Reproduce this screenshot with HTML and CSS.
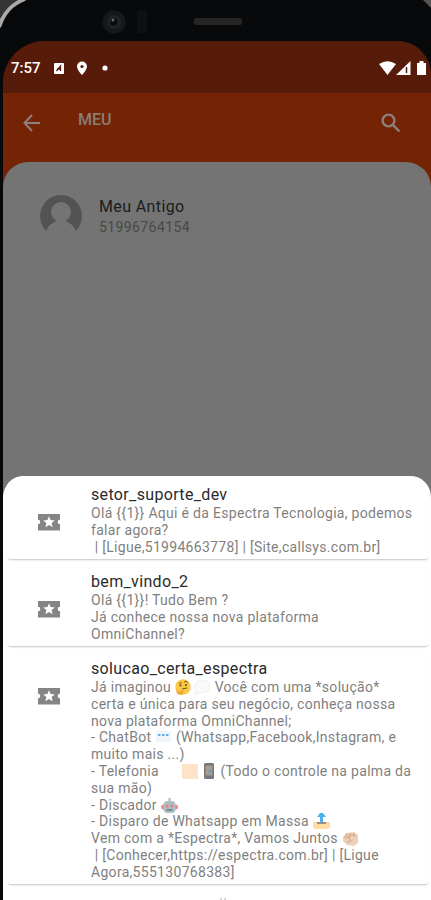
FILE: index.html
```html
<!DOCTYPE html>
<html lang="pt-BR">
<head>
<meta charset="utf-8">
<title>MEU</title>
<link rel="stylesheet" href="styles.css">
</head>
<body>
<svg class="defs" width="0" height="0"><defs>
<symbol id="ticket" viewBox="0 0 22 18"><path fill="#858585" d="M0 1h22v5.700a2.300 2.300 0 0 0 0 4.600V17.500H0v-6.200a2.300 2.300 0 0 0 0-4.600z"/><path fill="#fff" d="m11 3.200 1.600 3.900 4.200.3-3.200 2.700 1 4.100-3.600-2.300-3.600 2.300 1-4.100-3.200-2.700 4.200-.3z"/></symbol>
</defs></svg>
<div class="phone">
  <header class="bezel">
    <svg width="431" height="41" viewBox="0 0 431 41">
      <path d="M0 0h22C10 6 4 15 0 27z" fill="#333537"/>
      <path d="M25-1C12 4 4 12-1 27" fill="none" stroke="#aaa" stroke-width="4"/>
      <path d="M423 0h8v8z" fill="#555"/>
      <circle cx="114" cy="22" r="11.500" fill="#17181a"/><circle cx="114" cy="22" r="7" fill="#202124"/><circle cx="114" cy="22" r="3.500" fill="#08090b"/><circle cx="113" cy="20" r="1.500" fill="#666970"/>
      <rect x="137" y="10" width="10" height="23" rx="2" fill="#0f1011"/>
      <rect x="194" y="18" width="48" height="7" rx="2" fill="#252526"/>
    </svg>
  </header>
  <main class="screen">
    <div class="status">
      <span class="clock">7:57</span>
      <svg class="notes" width="58" height="18" viewBox="0 0 58 18">
        <rect x="2" y="4" width="10" height="11" rx="1" fill="#fff"/><path d="m4.500 12 4-5v5M5 10h4" stroke="#571b09" stroke-width="1.300" fill="none"/>
        <path d="M30 2.500a5 5 0 0 0-5 5c0 3.500 5 8.500 5 8.500s5-5 5-8.500a5 5 0 0 0-5-5" fill="#fff"/><circle cx="30" cy="7.500" r="1.600" fill="#571b09"/>
        <circle cx="53" cy="9" r="2.600" fill="#fff"/>
      </svg>
      <svg class="signals" width="50" height="18" viewBox="0 0 50 18">
        <path d="M1 5Q9.500-.5 18 5L9.500 16z" fill="#fff"/><path d="M18 16 32.500 2v14z" fill="#fff"/><path d="M28.500 8v6" stroke="#571b09" stroke-width="1.500"/>
        <path d="M39 4h2.500V2h4v2H48v12h-9z" fill="#fff"/>
      </svg>
    </div>
    <div class="appbar">
      <svg width="20" height="20" viewBox="0 0 20 20" fill="none" stroke="#8c807c" stroke-width="2"><path d="M18 10H3M10 2 2.500 10l7.500 8"/></svg>
      <h1>MEU</h1>
      <svg class="search" width="22" height="22" viewBox="0 0 22 22" fill="none" stroke="#8c807c" stroke-width="2.400"><circle cx="8.500" cy="8.500" r="5.900"/><path d="m12.800 12.800 6.700 6.700"/></svg>
    </div>
    <section class="contacts">
      <svg width="44" height="44" viewBox="0 0 44 44"><circle cx="22" cy="22" r="21" fill="#535353"/><path d="M7 37c3-7 6-7 10-10h10c4 3 7 3 10 10-5 9-25 9-30 0z" fill="#747474"/><circle cx="22" cy="18" r="10" fill="#747474"/></svg>
      <div class="contact"><div class="name">Meu Antigo</div><div class="number">51996764154</div></div>
    </section>
    <section class="sheet">
      <article class="card">
        <svg class="ticket"><use href="#ticket"/></svg>
        <div class="copy"><h2>setor_suporte_dev</h2>
          <p>Olá {{1}} Aqui é da Espectra Tecnologia, podemos</p><p>falar agora?</p><p> | [Ligue,51994663778] | [Site,callsys.com.br]</p></div>
      </article>
      <article class="card">
        <svg class="ticket"><use href="#ticket"/></svg>
        <div class="copy"><h2>bem_vindo_2</h2><p>Olá {{1}}! Tudo Bem ?</p><p>Já conhece nossa nova plataforma</p><p>OmniChannel?</p></div>
      </article>
      <article class="card">
        <svg class="ticket"><use href="#ticket"/></svg>
        <div class="copy"><h2>solucao_certa_espectra</h2>
          <p>Já imaginou <svg class="emoji wide" viewBox="0 0 36 17"><circle cx="8" cy="8" r="7.700" fill="#fac943"/><path d="M4 5q2-2 3-1M9 3q3-2 4 1M7 10l5-1" fill="none" stroke="#75511c"/><circle cx="5.500" cy="6.500" r="1" fill="#65451b"/><circle cx="11" cy="6" r="1" fill="#65451b"/><path d="m1 10 2 3 6-2-2 5-5-1z" fill="#eda936"/><path d="M21 5q1-4 6-3 6-2 7 4 2 5-4 7l-6 1-4 2 1-4q-4-3 0-7" fill="#fafafa" stroke="#f0f0f0"/></svg> Você com uma *solução*</p>
          <p>certa e única para seu negócio, conheça nossa</p><p>nova plataforma OmniChannel;</p>
          <p>- ChatBot <svg class="emoji" viewBox="0 0 17 17"><path d="M1 2h15v11H5l-3 2v-2H1z" fill="#f1f6f9"/><path d="M3 6h11" stroke="#62b0e5" stroke-width="2" stroke-dasharray="2.500 1.500"/></svg> (Whatsapp,Facebook,Instagram, e</p><p>muito mais ...)</p>
          <p>- Telefonia <svg class="emoji phones" viewBox="0 0 54 17"><rect x="19" y="1" width="16" height="15" fill="#ffe3c9"/><rect x="41" y="0" width="10" height="16" rx="1.500" fill="#777"/><rect x="42.500" y="2.500" width="7" height="10" fill="#9a9d9e"/><path d="M43 5h2m1 0h3M43 9h2" stroke="#c99875" stroke-width="2"/><path d="M46 8h3" stroke="#6c9fa3" stroke-width="2"/></svg> (Todo o controle na palma da</p><p>sua mão)</p>
          <p>- Discador <svg class="emoji" viewBox="0 0 17 17"><path d="M8.500 1v4" stroke="#a8b9be" stroke-width="2"/><circle cx="2.500" cy="10" r="2.500" fill="#e98989"/><circle cx="14.500" cy="10" r="2.500" fill="#e98989"/><rect x="2.500" y="4" width="12" height="12" rx="4" fill="#aebfc4"/><circle cx="6" cy="9" r="1.500" fill="#e57e7e"/><circle cx="11" cy="9" r="1.500" fill="#e57e7e"/><path d="M5.500 13h6" stroke="#68777c" stroke-width="1.500"/></svg></p>
          <p>- Disparo de Whatsapp em Massa <svg class="emoji" viewBox="0 0 17 17"><path d="M0 9h4l2 2h5l2-2h4v4q0 3-3 3H3q-3 0-3-3z" fill="#ffdca0"/><path d="M4 10h9" stroke="#8c9293" stroke-width="2"/><path d="M8.500 9V4" stroke="#4eb0e8" stroke-width="3"/><path d="m4 4 3-4h3l3 4z" fill="#4eb0e8"/></svg></p>
          <p>Vem com a *Espectra*, Vamos Juntos <svg class="emoji" viewBox="0 0 17 17"><path d="M1 7 4 3l8-1 4 3v8l-4 3-7-1-4-4z" fill="#eed0b6"/><path d="m2 7 5 1 1-3 6 1M7 8l2 3-4 1M4 4l2 3M8 3v4M12 3v3" fill="none" stroke="#cda98d"/></svg></p>
          <p> | [Conhecer,https://espectra.com.br] | [Ligue</p><p>Agora,555130768383]</p></div>
      </article>
      <article class="card next"><svg width="8" height="2" viewBox="0 0 8 2"><path d="M1 1h2M5 1h2" stroke="#aaa"/></svg></article>
    </section>
  </main>
</div>
</body>
</html>
```
FILE: styles.css
```css
* { box-sizing: border-box; }
html, body { margin: 0; width: 431px; height: 900px; overflow: hidden; }
body { font-family: Roboto, "Liberation Sans", sans-serif; background: #07090b; }
.defs { display: block; height: 0; }
svg { display: block; flex: none; }
.phone { height: 900px; background: #07090b; overflow: hidden; }
.bezel { height: 41px; }
.screen { margin-left: 3px; height: 859px; display: flex; flex-direction: column; background: #752305; border-radius: 42px 34px 0 0; overflow: hidden; }
.status { flex: none; height: 52px; background: #571b09; display: flex; align-items: center; padding: 2px 3px 0 8px; color: #fff; }
.clock { font-size: 15px; font-weight: 500; width: 40px; }
.notes { margin-left: 1px; }
.signals { margin-left: auto; }
.appbar { flex: none; height: 69px; display: flex; align-items: center; padding: 0 29px 10px 19px; }
.appbar h1 { margin: -6px 0 0 36px; font-size: 16px; font-weight: 500; color: #8c7c78; }
.search { margin-left: auto; }
.contacts { flex: none; height: 334px; margin-bottom: -20px; background: #747474; border-radius: 25px 25px 0 0; display: flex; align-items: flex-start; gap: 16px; padding: 32px 36px; }
.contact { padding-top: 2px; }
.name { font-size: 16px; line-height: 21px; letter-spacing: .38px; color: #1c1c1c; }
.number { font-size: 14px; line-height: 21px; letter-spacing: .4px; color: #484848; }
.sheet { flex: 1; min-height: 0; background: #fff; border-radius: 21px 21px 0 0; overflow: hidden; display: flex; flex-direction: column; gap: 4px; padding: 0 2px 0 4px; }
.card { flex: none; display: flex; align-items: flex-start; padding: 9px 0 3px 31px; height: 83px; border-radius: 4px; box-shadow: 0 2px 2px -1px #c4c4c4; background: #fff; }
.card:nth-child(3) { height: 234px; }
.card.next { height: 12px; padding: 10px 0 0 212px; box-shadow: none; }
.ticket { width: 22px; height: 18px; margin: 28px 31px 0 0; }
h2 { margin: 0; white-space: pre; font-size: 16px; line-height: 20px; font-weight: 400; letter-spacing: .34px; color: #2a2a2a; }
p { margin: 0; white-space: pre; height: 16.800px; font-size: 14px; line-height: 16.800px; letter-spacing: .3px; color: #7f7f7f; }
.emoji { display: inline-block; width: 17px; height: 17px; vertical-align: -4px; }
.wide { width: 36px; }
.phones { width: 54px; }
```
